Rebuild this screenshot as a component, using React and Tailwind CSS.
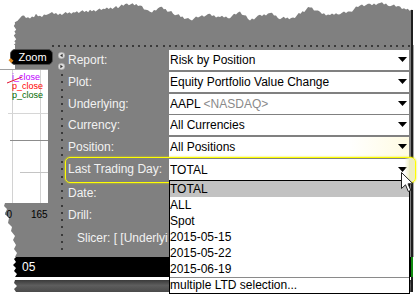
import React from "react";

function jag(points, step = 2, amp = 1) {
  const out = [];
  for (let i = 0; i < points.length - 1; i++) {
    const [x0, y0] = points[i];
    const [x1, y1] = points[i + 1];
    const dx = x1 - x0;
    const dy = y1 - y0;
    const len = Math.max(Math.abs(dx), Math.abs(dy));
    const n = Math.max(1, Math.round(len / step));
    const horiz = Math.abs(dx) >= Math.abs(dy);
    for (let k = 0; k < n; k++) {
      const t = k / n;
      const j = (((i * 7 + k * 13) % 5) - 2) * amp * 0.6;
      out.push([
        x0 + dx * t + (horiz ? 0 : j),
        y0 + dy * t + (horiz ? j : 0),
      ]);
    }
  }
  out.push(points[points.length - 1]);
  return out;
}

function TornTop() {
  const key = [
    [15, 45], [15, 24], [18, 19], [24, 16], [30, 18], [36, 15], [42, 17], [48, 13],
    [60, 14], [75, 12], [90, 11], [105, 9], [118, 7], [127, 4], [140, 5], [150, 13],
    [160, 7], [175, 14], [190, 20], [200, 16], [210, 15], [220, 17], [230, 17],
    [240, 12], [250, 20], [260, 16], [270, 13], [280, 18], [293, 18], [310, 7],
    [320, 13], [330, 15], [340, 13], [350, 12], [360, 5], [370, 5], [380, 3],
    [390, 5], [400, 7], [406, 9], [413, 10],
  ];
  const pts = jag(key).concat([[413, 45]]);
  const str = pts.map(([x, y]) => `${x.toFixed(1)},${y.toFixed(1)}`).join(" ");
  return (
    <svg width="418" height="45" className="block shrink-0">
      <polygon points={str} fill="#808080" />
      <rect x="411" y="10" width="2" height="35" fill="#1e1e1e" />
    </svg>
  );
}

function Dot() {
  return <div className="w-[2px] h-[2px] bg-[#3a3a3a] shrink-0" />;
}

function Arrow() {
  return (
    <svg width="9" height="5" className="shrink-0 mb-[1px]">
      <polygon points="0,0 9,0 4.5,5" fill="#000" />
    </svg>
  );
}

function Box({ children, tall, extra }) {
  return (
    <div
      className={`w-[240px] ${tall ? "h-[21px]" : "h-[20px]"} bg-white flex items-center pl-[1px] pr-[2px] text-black ${extra || ""}`}
    >
      <div className="flex-1 whitespace-nowrap overflow-hidden leading-[20px]">{children}</div>
      <Arrow />
    </div>
  );
}

function Row({ label, children, tall, mt, extra }) {
  return (
    <div className={`flex ${mt}`}>
      <div className="w-[104px] pl-[3px] leading-[20px] text-[#f2f2f2] whitespace-nowrap">{label}</div>
      <Box tall={tall} extra={extra}>{children}</Box>
    </div>
  );
}

function Circle({ dir }) {
  return (
    <svg width="7" height="7" viewBox="0 0 7 7" className="block">
      <circle cx="3.5" cy="3.5" r="3.3" fill="#dcdcdc" stroke="#9a9a9a" strokeWidth="0.5" />
      {dir === "left" ? (
        <polygon points="4.6,1.7 4.6,5.3 2.1,3.5" fill="#333" />
      ) : (
        <polygon points="2.4,1.7 2.4,5.3 4.9,3.5" fill="#333" />
      )}
    </svg>
  );
}

export default function App() {
  const hDots = Array.from({ length: 59 });
  const vDots = Array.from({ length: 25 });
  return (
    <div className="w-[418px] h-[300px] overflow-hidden relative bg-white font-['Liberation_Sans',Arial,sans-serif] text-[12px]">
      <TornTop />

      {/* middle band */}
      <div className="flex h-[212px]">
        {/* left column with chart */}
        <div className="w-[48px] shrink-0 flex flex-col">
          <div className="h-[24px] flex">
            <div className="w-[15px]" />
            <div className="flex-1 bg-[#808080]" />
          </div>
          <div className="h-[134px] bg-white relative border-t border-[#a0a0a0]">
            <svg width="48" height="133" className="absolute inset-0">
              <line x1="12.5" y1="0" x2="12.5" y2="133" stroke="#d2d2d2" />
              <line x1="40.5" y1="0" x2="40.5" y2="133" stroke="#d2d2d2" />
              <line x1="8" y1="43.5" x2="48" y2="43.5" stroke="#d6d6d6" />
              <line x1="10" y1="70.5" x2="48" y2="70.5" stroke="#8c8c8c" />
              <line x1="20" y1="102.5" x2="48" y2="102.5" stroke="#c4c4c4" />
              <line x1="7" y1="13" x2="22" y2="7" stroke="#e01030" strokeWidth="1" />
            </svg>
            <div className="relative pt-[3px] pl-[12px] text-[9px] leading-[9px]">
              <div className="text-[#c000ff]">i_close</div>
              <div className="text-[#ff0000]">p_close</div>
              <div className="text-[#006a00]">p_close</div>
            </div>
          </div>
          <div className="flex-1 bg-[#808080] [clip-path:polygon(5px_0,48px_0,48px_54px,15px_54px,17px_50px,14px_46px,16px_42px,13px_37px,15px_33px,11px_28px,12px_24px,8px_20px,9px_15px,5px_11px,7px_6px,4px_3px)]">
            <div className="pt-[6px] flex leading-[12px] text-[10px] text-black">
              <span className="w-[31px] pl-[1px]">30</span>
              <span>165</span>
            </div>
          </div>
        </div>

        {/* form panel */}
        <div className="w-[363px] shrink-0 bg-[#808080] flex flex-col">
          <div className="pl-[4px] flex justify-between h-[2px]">
            {hDots.map((_, i) => (
              <Dot key={i} />
            ))}
          </div>
          <div className="flex mt-[3px]">
            <div className="w-[17px] pl-[10px] flex flex-col">
              <div className="w-[7px] mt-[2px]"><Circle dir="left" /></div>
              <div className="w-[7px] mt-[4px]"><Circle dir="right" /></div>
              <div className="w-[7px] mt-[4px] h-[176px] flex flex-col justify-between items-center">
                {vDots.map((_, i) => (
                  <Dot key={i} />
                ))}
              </div>
            </div>
            <div className="flex flex-col">
              <Row label="Report:" mt="mt-0">Risk by Position</Row>
              <Row label="Plot:" mt="mt-[2px]">Equity Portfolio Value Change</Row>
              <Row label="Underlying:" mt="mt-[2px]">
                AAPL <span className="text-[#8a8a8a]">&lt;NASDAQ&gt;</span>
              </Row>
              <Row label="Currency:" mt="mt-[1px]">All Currencies</Row>
              <Row
                label="Position:"
                mt="mt-[2px]"
                extra="bg-[linear-gradient(to_right,#ffffff_75%,#fffbe2)]"
              >
                All Positions
              </Row>
              <Row label="Last Trading Day:" mt="mt-[2px]" tall>
                TOTAL
              </Row>
              <div className="mt-[3px] h-[20px] pl-[3px] leading-[20px] text-[#f2f2f2]">Date:</div>
              <div className="mt-[2px] h-[20px] pl-[3px] leading-[20px] text-[#f2f2f2]">Drill:</div>
              <div className="mt-[3px] h-[20px] w-[104px] pl-[12px] leading-[20px] text-[#f2f2f2] whitespace-nowrap">
                Slicer: [ [Underlyi
              </div>
            </div>
          </div>
        </div>
        <div className="w-[2px] bg-[#1e1e1e]" />
        <div className="w-[1px] bg-[#a8a8a8]" />
      </div>

      {/* black bar */}
      <div className="flex h-[20px]">
        <div className="w-[411px] bg-black [clip-path:polygon(16px_0,411px_0,411px_20px,15px_20px,17px_17px,14px_14px,16px_11px,13px_8px,16px_5px,14px_2px)] pl-[22px] text-white text-[12px] leading-[20px]">
          05
        </div>
        <div className="w-[2px] bg-[#108a10]" />
      </div>
      <div className="h-[3px] flex">
        <div className="w-[411px]" />
        <div className="w-[2px] bg-[#1e1e1e]" />
      </div>
      <div className="flex h-[12px]">
        <div className="w-[411px] bg-[linear-gradient(to_bottom,#3a3a3a,#5e5e5e_45%,#4a4a4a)] [clip-path:polygon(15px_0,411px_0,411px_12px,16px_12px,14px_9px,17px_6px,14px_3px)]" />
        <div className="w-[2px] bg-[#1e1e1e]" />
      </div>

      {/* Zoom button overlay */}
      <div className="absolute left-[10px] top-[49px] w-[43px] h-[16px] rounded-[5px] bg-black border border-[#4a4a4a] text-white text-[11px] leading-[14px] flex items-center justify-center pl-[2px]">
        Zoom
      </div>
      <div className="absolute left-[9px] top-[59px] w-[4px] h-[3px] bg-[#e08a20] rotate-45" />

      {/* highlight around Last Trading Day */}
      <div className="absolute left-[65px] top-[157px] w-[351px] h-[26px] rounded-[5px] border border-[#ffff00] shadow-[0_0_2px_#e8e800] bg-[linear-gradient(to_right,transparent_97%,#eeeec4_98.5%)] z-10" />

      {/* dropdown list */}
      <div className="absolute left-[169px] top-[180px] w-[241px] h-[114px] bg-white border border-black z-20 flex flex-col text-black text-[12px]">
        <div className="h-[16px] leading-[16px] bg-[#c2c2c2]">TOTAL</div>
        <div className="h-[16px] leading-[16px]">ALL</div>
        <div className="h-[16px] leading-[16px]">Spot</div>
        <div className="h-[16px] leading-[16px]">2015-05-15</div>
        <div className="h-[16px] leading-[16px]">2015-05-22</div>
        <div className="h-[16px] leading-[16px]">2015-06-19</div>
        <div className="h-[1px] bg-[#8a8a8a]" />
        <div className="h-[15px] leading-[15px]">multiple LTD selection...</div>
      </div>

      {/* mouse cursor */}
      <svg width="13" height="21" viewBox="0 0 13 21" className="absolute left-[401px] top-[172px] z-30">
        <path d="M0.5 0.5 L0.5 16.5 L4.5 12.8 L7.3 19.5 L9.8 18.4 L7 11.8 L12 11.8 Z" fill="#fff" stroke="#222" strokeWidth="1" strokeLinejoin="miter" />
      </svg>
    </div>
  );
}
